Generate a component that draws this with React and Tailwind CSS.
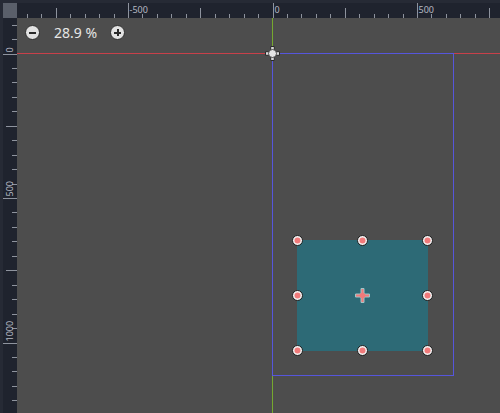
import React from "react";

const S = 0.289;
const OX = 272.5;
const OY = 53.5;

function TopRuler() {
  const items = [];
  for (let u = -1000; u <= 1000; u += 50) {
    const x = Math.round(OX + u * S);
    if (x < 17 || x > 500) continue;
    const major = u % 500 === 0;
    const mid = !major && u % 250 === 0;
    const y1 = major ? 3 : mid ? 8 : 14;
    items.push(<rect key={"t" + u} x={x} y={y1} width="1" height={18 - y1} fill="#8e939e" />);
    if (major) {
      items.push(
        <text key={"l" + u} x={x + 1.5} y={12.5} fontSize="9" fill="#b4b8c2" fontFamily="'Noto Sans', sans-serif">
          {u}
        </text>
      );
    }
  }
  return (
    <svg className="block" width="483" height="15" viewBox="17 3 483 15" shapeRendering="crispEdges">
      {items}
    </svg>
  );
}

function LeftRuler() {
  const items = [];
  for (let u = -500; u <= 1500; u += 50) {
    const y = Math.round(OY + u * S);
    if (y < 18 || y > 413) continue;
    const major = u % 500 === 0;
    const mid = !major && u % 250 === 0;
    const x1 = major ? 3 : mid ? 6 : 12;
    items.push(<rect key={"t" + u} x={x1} y={y} width={17 - x1} height="1" fill="#8e939e" />);
    if (major) {
      items.push(
        <text
          key={"l" + u}
          transform={`translate(12.5 ${y - 1.5}) rotate(-90)`}
          fontSize="9"
          fill="#b4b8c2"
          fontFamily="'Noto Sans', sans-serif"
        >
          {u}
        </text>
      );
    }
  }
  return (
    <svg className="block" width="14" height="395" viewBox="3 18 14 395" shapeRendering="crispEdges">
      {items}
    </svg>
  );
}

function Handle({ x, y }) {
  return (
    <g>
      <circle cx={x} cy={y} r="5" fill="#f2f2f2" stroke="#1e1e1e" strokeWidth="1" />
      <circle cx={x} cy={y} r="3" fill="#f07a7a" />
    </g>
  );
}

function Scene() {
  const handles = [
    [297.5, 240.5],
    [362.5, 240.5],
    [427.5, 240.5],
    [297.5, 295.5],
    [427.5, 295.5],
    [297.5, 350.5],
    [362.5, 350.5],
    [427.5, 350.5],
  ];
  const cx = 362.5;
  const cy = 295.5;
  return (
    <svg className="absolute left-0 top-0 block" width="483" height="395" viewBox="17 18 483 395">
      {handles.map(([x, y], i) => (
        <Handle key={i} x={x} y={y} />
      ))}
      {/* pivot */}
      <path
        d={`M${cx - 1.5} ${cy - 7} h3 v5.5 h5.5 v3 h-5.5 v5.5 h-3 v-5.5 h-5.5 v-3 h5.5 z`}
        fill="#f07a7a"
        stroke="#9fc7c9"
        strokeWidth="1"
        strokeLinejoin="round"
      />
      <circle cx={cx} cy={cy} r="2.8" fill="#f07a7a" />
      {/* origin crosshair */}
      <g>
        <path
          d={`M${OX - 1.8} ${OY - 7} h3.6 v5.2 h5.2 v3.6 h-5.2 v5.2 h-3.6 v-5.2 h-5.2 v-3.6 h5.2 z`}
          fill="#d8d8d8"
          stroke="#2a2a2a"
          strokeWidth="1"
          strokeLinejoin="round"
        />
        <circle cx={OX} cy={OY} r="4" fill="#e4e4e4" stroke="#2a2a2a" strokeWidth="0.8" />
      </g>
    </svg>
  );
}

export default function App() {
  return (
    <div
      className="w-[500px] h-[413px] overflow-hidden bg-[#262a35] pt-[3px] pl-[3px] flex flex-col"
      style={{ fontFamily: "'Noto Sans', sans-serif" }}
    >
      <div className="flex h-[15px] shrink-0">
        <div className="w-[14px] h-[15px] bg-[#5a5f6a]" />
        <div className="flex-1 bg-[#1f232e]">
          <TopRuler />
        </div>
      </div>
      <div className="flex h-[395px] shrink-0">
        <div className="w-[14px] bg-[#1f232e]">
          <LeftRuler />
        </div>
        <div className="relative w-[483px] h-[395px] bg-[#4d4d4d] overflow-hidden">
          {/* x axis */}
          <div className="absolute left-0 top-[35px] w-[483px] h-[1px] bg-[#c8404a]" />
          {/* y axis */}
          <div className="absolute left-[255px] top-0 w-[1px] h-[395px] bg-[#76a82e]" />
          {/* viewport frame */}
          <div className="absolute left-[255px] top-[35px] w-[182px] h-[323px] border border-[#5656dc]" />
          {/* sprite */}
          <div className="absolute left-[280px] top-[222px] w-[131px] h-[111px] bg-[#2d6a76]" />
          <Scene />
          <div className="absolute left-[8px] top-[7px] flex items-center">
            <div className="w-[15px] h-[15px] rounded-full bg-[#e2e2e2] flex items-center justify-center border border-[#2e2e2e]">
              <div className="w-[7px] h-[2px] bg-[#2a2a2a]" />
            </div>
            <span className="ml-[14px] text-[14px] leading-none text-[#e6e6e6]">28.9 %</span>
            <div className="ml-[13px] w-[15px] h-[15px] rounded-full bg-[#e2e2e2] flex items-center justify-center border border-[#2e2e2e] relative">
              <div className="w-[7px] h-[2px] bg-[#2a2a2a]" />
              <div className="absolute w-[2px] h-[7px] bg-[#2a2a2a]" />
            </div>
          </div>
        </div>
      </div>
    </div>
  );
}
